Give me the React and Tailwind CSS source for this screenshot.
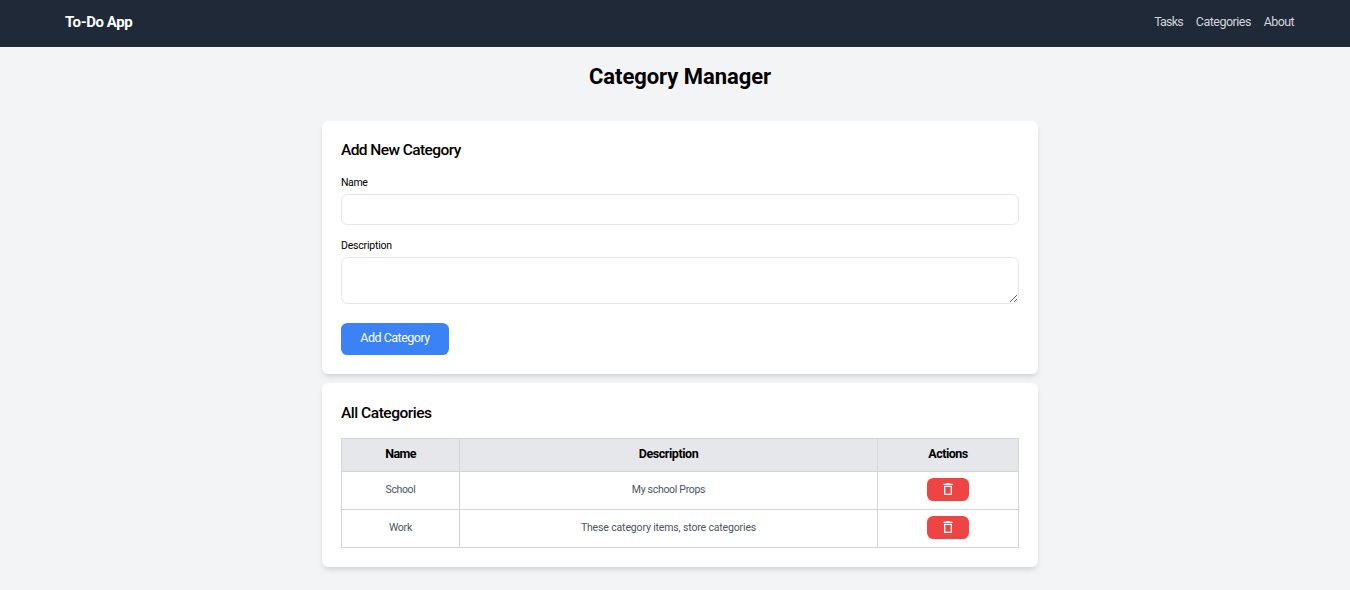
import React from "react";
import { MdDeleteOutline } from "react-icons/md";

const categories = [
  { name: "School", description: "My school Props", nameStyle: "tracking-[-0.35px]", descStyle: "tracking-[-0.3px]" },
  { name: "Work", description: "These category items, store categories", nameStyle: "tracking-[-0.2px]", descStyle: "tracking-[-0.15px]" },
];

function Header() {
  return (
    <header className="flex h-[47px] items-start justify-between bg-[#1f2937] pr-[56px] pl-[65px]">
      <span className="mt-[12px] text-[15px] leading-[20px] font-bold tracking-[-0.42px] whitespace-nowrap text-white">To-Do App</span>
      <nav className="mt-[12px] flex gap-[12.8px] text-[12.5px] leading-[20px] text-[#d1d5db]">
        <a href="#tasks" className="tracking-[-0.8px]">Tasks</a>
        <a href="#categories" className="tracking-[-0.5px]">Categories</a>
        <a href="#about" className="tracking-[-0.6px]">About</a>
      </nav>
    </header>
  );
}

function CategoryForm() {
  return (
    <section className="h-[253px] rounded-[6.4px] bg-white px-[19px] pt-[19px] shadow-md">
      <h2 className="h-[33px] text-[15.5px] leading-[20px] font-medium tracking-[-0.57px]">Add New Category</h2>
      <form className="flex flex-col items-start">
        <label htmlFor="name" className="h-[21px] text-[10.5px] leading-[20px] tracking-[-0.4px]">Name</label>
        <input id="name" className="block h-[31px] w-full rounded-[6.4px] border border-[#e5e7eb]" />
        <label htmlFor="description" className="mt-[11px] h-[21px] text-[10.5px] leading-[20px] tracking-[-0.2px]">Description</label>
        <textarea id="description" className="block h-[47px] w-full resize rounded-[6.4px] border border-[#e5e7eb]" />
        <button type="button" className="mt-[19px] h-[32px] w-[108px] rounded-[6.4px] bg-[#3b82f6] pb-[2px] text-[12.5px] leading-[20px] tracking-[-0.5px] text-white">Add Category</button>
      </form>
    </section>
  );
}

function CategoryTable() {
  return (
    <section className="mt-[9px] h-[184px] rounded-[6.4px] bg-white px-[19px] pt-[19px] shadow-md">
      <h2 className="h-[36px] text-[15.5px] leading-[22px] font-medium tracking-[-0.48px]">All Categories</h2>
      <div className="border-t border-l border-[#d1d5db] text-center">
        <div className="grid h-[33px] grid-cols-[118px_418px_1fr] bg-[#e5e7eb] text-[12.5px] leading-[30px] font-bold">
          <div className="border-r border-b border-[#d1d5db] tracking-[-0.6px]">Name</div>
          <div className="border-r border-b border-[#d1d5db] tracking-[-0.45px]">Description</div>
          <div className="border-r border-b border-[#d1d5db] tracking-[-0.5px]">Actions</div>
        </div>
        {categories.map((c) => (
          <div key={c.name} className="grid h-[38px] grid-cols-[118px_418px_1fr] text-[10.5px] leading-[35px] text-[#4b5563]">
            <div className={"border-r border-b border-[#d1d5db] " + c.nameStyle}>{c.name}</div>
            <div className={"border-r border-b border-[#d1d5db] " + c.descStyle}>{c.description}</div>
            <div className="flex justify-center border-r border-b border-[#d1d5db] pt-[6px]">
              <button type="button" aria-label="Delete" className="flex h-[23px] w-[42px] items-start justify-center rounded-[6.4px] bg-[#ef4444] pt-[3px] text-white">
                <MdDeleteOutline size={16} />
              </button>
            </div>
          </div>
        ))}
      </div>
    </section>
  );
}

export default function App() {
  return (
    <div className="h-[590px] w-full overflow-hidden bg-[#f3f4f6] font-['Roboto','Liberation_Sans',sans-serif] text-black">
      <Header />
      <main className="ml-[322px] w-[716px]">
        <h1 className="h-[74px] pt-[15px] text-center text-[22px] leading-[30px] font-bold tracking-[-0.05px]">Category Manager</h1>
        <CategoryForm />
        <CategoryTable />
      </main>
    </div>
  );
}
